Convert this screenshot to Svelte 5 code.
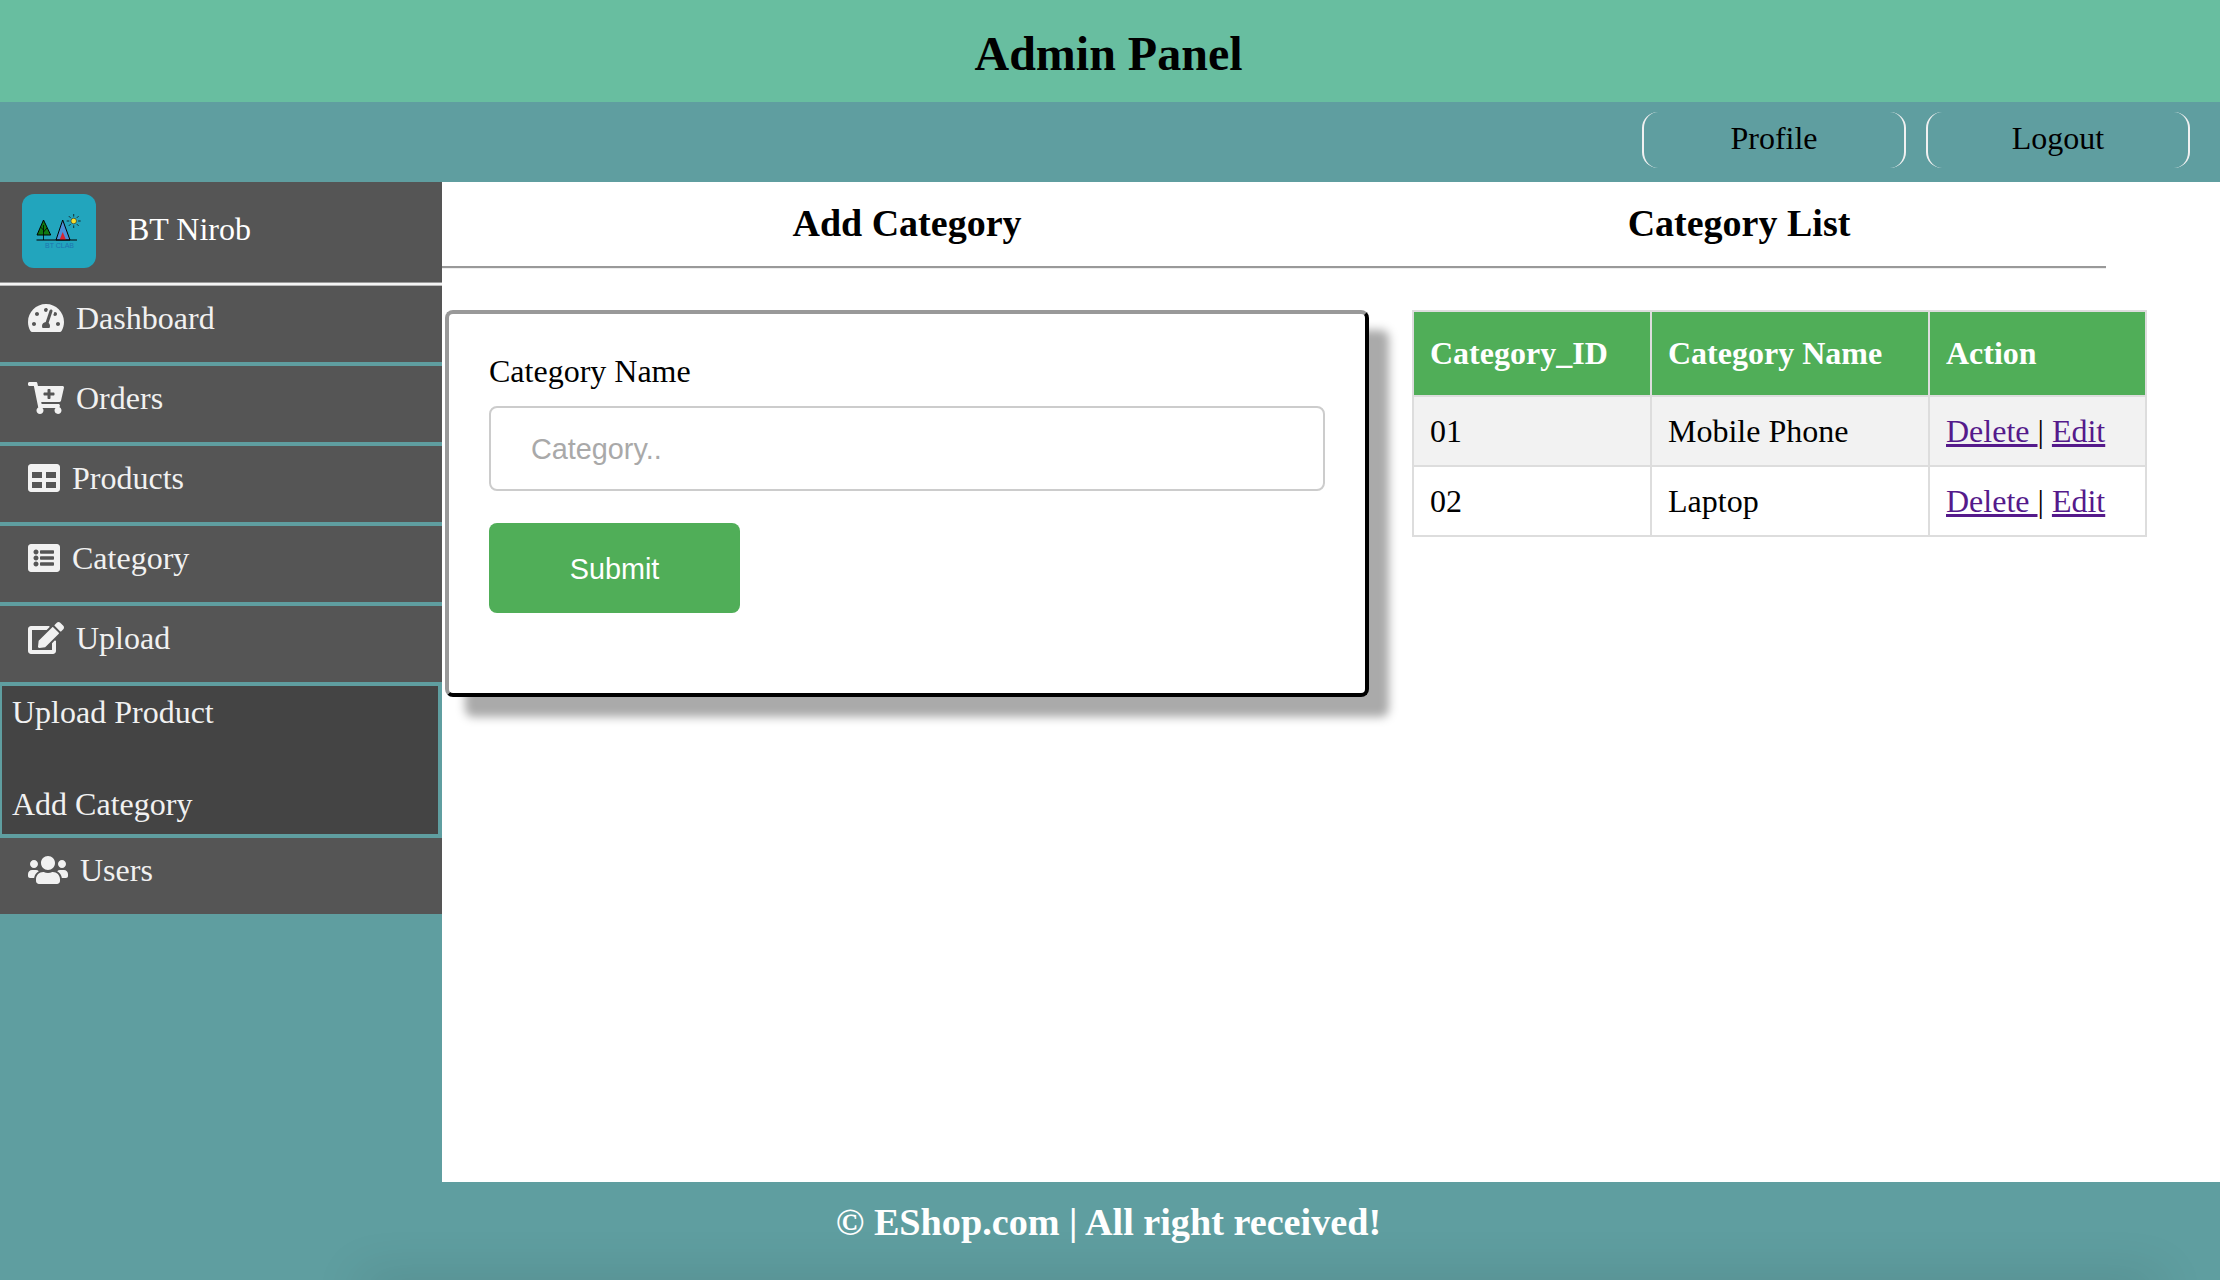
<script>
  const menu = [
    { label: "Dashboard", vb: "0 0 576 512", w: 36, d: "M288 32C128.94 32 0 160.94 0 320c0 52.8 14.25 102.26 39.06 144.8 5.61 9.62 16.3 15.2 27.44 15.2h443c11.14 0 21.83-5.58 27.44-15.2C561.75 422.26 576 372.8 576 320c0-159.06-128.94-288-288-288zm0 64c14.71 0 26.58 10.13 30.32 23.65-1.11 2.26-2.64 4.23-3.45 6.67l-9.22 27.67c-5.13 3.49-10.97 6.01-17.64 6.01-17.67 0-32-14.33-32-32S270.33 96 288 96zM96 384c-17.67 0-32-14.33-32-32s14.33-32 32-32 32 14.33 32 32-14.33 32-32 32zm48-160c-17.67 0-32-14.33-32-32s14.33-32 32-32 32 14.33 32 32-14.33 32-32 32zm246.77-72.41l-61.33 184C343.13 347.33 352 364.54 352 384c0 11.72-3.38 22.55-8.88 32H232.88c-5.5-9.45-8.88-20.28-8.88-32 0-33.94 26.5-61.43 59.9-63.59l61.34-184.01c4.17-12.56 17.73-19.45 30.36-15.17 12.57 4.19 19.35 17.79 15.17 30.36zm14.66 57.2l15.52-46.55c3.47-1.29 7.13-2.23 11.05-2.23 17.67 0 32 14.33 32 32s-14.33 32-32 32c-11.38-.01-20.89-6.28-26.57-15.22zM480 384c-17.67 0-32-14.33-32-32s14.33-32 32-32 32 14.33 32 32-14.33 32-32 32z" },
    { label: "Orders", vb: "0 0 576 512", w: 36, d: "M504.717 320H211.572l6.545 32h268.418c15.401 0 26.816 14.301 23.403 29.319l-5.517 24.276C523.112 414.668 536 433.828 536 456c0 31.202-25.519 56.444-56.824 55.994-29.823-.429-54.35-24.631-55.155-54.447-.44-16.287 6.085-31.049 16.803-41.548H231.176C241.553 426.165 248 440.326 248 456c0 31.813-26.528 57.431-58.67 55.938-28.54-1.325-51.751-24.385-53.251-52.917-1.158-22.034 10.436-41.455 28.051-51.586L93.883 64H24C10.745 64 0 53.255 0 40V24C0 10.745 10.745 0 24 0h102.529c11.401 0 21.228 8.021 23.513 19.19L159.208 64H551.99c15.401 0 26.816 14.301 23.403 29.319l-47.273 208C525.637 312.246 515.923 320 504.717 320zM408 168h-48v-40c0-8.837-7.163-16-16-16h-16c-8.837 0-16 7.163-16 16v40h-48c-8.837 0-16 7.163-16 16v16c0 8.837 7.163 16 16 16h48v40c0 8.837 7.163 16 16 16h16c8.837 0 16-7.163 16-16v-40h48c8.837 0 16-7.163 16-16v-16c0-8.837-7.163-16-16-16z" },
    { label: "Products", vb: "0 0 512 512", w: 32, d: "M464 32H48C21.49 32 0 53.49 0 80v352c0 26.51 21.49 48 48 48h416c26.51 0 48-21.49 48-48V80c0-26.51-21.49-48-48-48zM224 416H64v-96h160v96zm0-160H64v-96h160v96zm224 160H288v-96h160v96zm0-160H288v-96h160v96z" },
    { label: "Category", vb: "0 0 512 512", w: 32, d: "M464 480H48c-26.51 0-48-21.49-48-48V80c0-26.51 21.49-48 48-48h416c26.51 0 48 21.49 48 48v352c0 26.51-21.49 48-48 48zM128 120c-22.091 0-40 17.909-40 40s17.909 40 40 40 40-17.909 40-40-17.909-40-40-40zm0 96c-22.091 0-40 17.909-40 40s17.909 40 40 40 40-17.909 40-40-17.909-40-40-40zm0 96c-22.091 0-40 17.909-40 40s17.909 40 40 40 40-17.909 40-40-17.909-40-40-40zm288-136v-32c0-6.627-5.373-12-12-12H204c-6.627 0-12 5.373-12 12v32c0 6.627 5.373 12 12 12h200c6.627 0 12-5.373 12-12zm0 96v-32c0-6.627-5.373-12-12-12H204c-6.627 0-12 5.373-12 12v32c0 6.627 5.373 12 12 12h200c6.627 0 12-5.373 12-12zm0 96v-32c0-6.627-5.373-12-12-12H204c-6.627 0-12 5.373-12 12v32c0 6.627 5.373 12 12 12h200c6.627 0 12-5.373 12-12z" },
    { label: "Upload", vb: "0 0 576 512", w: 36, d: "M402.6 83.2l90.2 90.2c3.8 3.8 3.8 10 0 13.8L274.4 405.6l-92.8 10.3c-12.4 1.4-22.9-9.1-21.5-21.5l10.3-92.8L388.8 83.2c3.8-3.8 10-3.8 13.8 0zm162-22.9l-48.8-48.8c-15.2-15.2-39.9-15.2-55.2 0l-35.4 35.4c-3.8 3.8-3.8 10 0 13.8l90.2 90.2c3.8 3.8 10 3.8 13.8 0l35.4-35.4c15.2-15.3 15.2-40 0-55.2zM384 346.2V448H64V128h229.8c3.2 0 6.2-1.3 8.5-3.5l40-40c7.6-7.6 2.2-20.5-8.5-20.5H48C21.5 64 0 85.5 0 112v352c0 26.5 21.5 48 48 48h352c26.5 0 48-21.5 48-48V306.2c0-10.7-12.9-16-20.5-8.5l-40 40c-2.2 2.3-3.5 5.3-3.5 8.5z" },
  ];
  const usersIcon = "M96 224c35.3 0 64-28.7 64-64s-28.7-64-64-64-64 28.7-64 64 28.7 64 64 64zm448 0c35.3 0 64-28.7 64-64s-28.7-64-64-64-64 28.7-64 64 28.7 64 64 64zm32 32h-64c-17.6 0-33.5 7.1-45.1 18.6 40.3 22.1 68.9 62 75.1 109.4h66c17.7 0 32-14.3 32-32v-32c0-35.3-28.7-64-64-64zm-256 0c61.9 0 112-50.1 112-112S381.9 32 320 32 208 82.1 208 144s50.1 112 112 112zm76.8 32h-8.3c-20.8 10-43.9 16-68.5 16s-47.6-6-68.5-16h-8.3C179.6 288 128 339.6 128 403.2V432c0 26.5 21.5 48 48 48h288c26.5 0 48-21.5 48-48v-28.8c0-63.6-51.6-115.2-115.2-115.2zm-223.7-13.4C161.5 263.1 145.6 256 128 256H64c-35.3 0-64 28.7-64 64v32c0 17.7 14.3 32 32 32h65.9c6.3-47.4 34.9-87.3 75.2-109.4z";

  const rows = [
    { id: "01", name: "Mobile Phone" },
    { id: "02", name: "Laptop" },
  ];
</script>

<div class="page">
  <header class="top"><h1>Admin Panel</h1></header>

  <nav class="bar">
    <a class="pill" href="#profile">Profile</a>
    <a class="pill" href="#logout">Logout</a>
  </nav>

  <div class="middle">
    <aside class="side">
      <div class="who">
        <svg class="logo" viewBox="0 0 74 74" aria-hidden="true">
          <path d="M21.5 26 L28.7 41 H15 Z" fill="#0f7a12" stroke="#000" stroke-width="1" />
          <path d="M21.5 31 V46 M21.5 38 L25 34 M21.5 36 L18.5 33" stroke="#000" stroke-width="0.8" fill="none" />
          <path d="M40.7 26 L48 46 H34 Z" fill="#4a8fd8" stroke="#000" stroke-width="1" />
          <path d="M40.7 38 L44 46 H37.5 Z" fill="#d8232f" />
          <path d="M14.5 46 H55" stroke="#000" stroke-width="1" />
          <circle cx="51.7" cy="27" r="2.8" fill="#f6de2c" stroke="#222" stroke-width="0.6" />
          <path d="M51.7 20 V22.6 M51.7 31.4 V34 M44.7 27 H47.3 M56.1 27 H58.7 M46.8 22.1 L48.6 23.9 M54.8 30.1 L56.6 31.9 M46.8 31.9 L48.6 30.1 M54.8 23.9 L56.6 22.1" stroke="#111" stroke-width="0.8" />
          <text x="37.5" y="54" text-anchor="middle" class="logotext">BT CLAB</text>
        </svg>
        <span>BT Nirob</span>
      </div>
      <div class="rule"></div>

      {#each menu as m}
        <a class="item" href="#x">
          <svg style:width="{m.w}px" viewBox={m.vb} aria-hidden="true"><path d={m.d} /></svg>
          <span>{m.label}</span>
        </a>
      {/each}

      <div class="sub">
        <a href="#up">Upload Product</a>
        <a href="#cat">Add Category</a>
      </div>

      <a class="item last" href="#users">
        <svg style:width="40px" viewBox="0 0 640 512" aria-hidden="true"><path d={usersIcon} /></svg>
        <span>Users</span>
      </a>
    </aside>

    <main class="content">
      <section class="left">
        <h3>Add Category</h3>
        <hr />
        <form class="card">
          <label for="cat">Category Name</label>
          <input id="cat" type="text" placeholder="Category.." />
          <button type="button">Submit</button>
        </form>
      </section>

      <section class="right">
        <h3>Category List</h3>
        <hr />
        <table>
          <colgroup>
            <col style="width:238px" />
            <col style="width:278px" />
            <col />
          </colgroup>
          <thead>
            <tr><th>Category_ID</th><th>Category Name</th><th>Action</th></tr>
          </thead>
          <tbody>
            {#each rows as r}
              <tr>
                <td>{r.id}</td>
                <td>{r.name}</td>
                <td><a href="#d">{"Delete "}</a>{"| "}<a href="#e">Edit</a></td>
              </tr>
            {/each}
          </tbody>
        </table>
      </section>
    </main>
  </div>

  <footer class="foot">© EShop.com | All right received!</footer>
</div>

<style>
  :global(body) {
    margin: 0;
    background: #5f9ea0;
  }
  .page {
    display: flex;
    flex-direction: column;
    height: 1280px;
    overflow: hidden;
    font-family: "Liberation Serif", "Times New Roman", serif;
    font-size: 32px;
    color: #000;
  }
  .top {
    height: 102px;
    box-sizing: border-box;
    padding: 5px 3px 0 0;
    display: flex;
    align-items: center;
    justify-content: center;
    background: #68bea0;
  }
  h1 {
    margin: 0;
    font-size: 48px;
    font-weight: bold;
  }
  .bar {
    height: 80px;
    box-sizing: border-box;
    padding: 10px 30px 0 0;
    display: flex;
    justify-content: flex-end;
    gap: 20px;
    background: #5f9ea0;
  }
  .pill {
    width: 264px;
    height: 56px;
    box-sizing: border-box;
    padding-bottom: 3px;
    display: flex;
    align-items: center;
    justify-content: center;
    color: #000;
    text-decoration: none;
    border-left: 2px solid #f1f1f1;
    border-right: 2px solid #f1f1f1;
    border-radius: 16px;
  }
  .middle {
    flex: 1;
    display: flex;
    min-height: 0;
  }
  .side {
    width: 442px;
    flex: none;
    background: #5f9ea0;
  }
  .who {
    height: 100px;
    box-sizing: border-box;
    padding: 12px 0 0 22px;
    display: flex;
    gap: 32px;
    background: #555;
    color: #fff;
  }
  .who span {
    margin-top: 17px;
  }
  .rule {
    height: 4px;
    box-sizing: border-box;
    background: #f4f4f4;
    border-top: 1px solid #999;
    border-bottom: 1px solid #bbb;
  }
  .logo {
    width: 74px;
    height: 74px;
    border-radius: 12px;
    background: #22a5bd;
  }
  .logotext {
    font-family: "Liberation Sans", sans-serif;
    font-size: 7px;
    fill: #1f74b0;
  }
  .item {
    height: 76px;
    display: flex;
    align-items: flex-start;
    gap: 12px;
    padding-left: 28px;
    background: #555;
    color: #f1f1f1;
    text-decoration: none;
    border-bottom: 4px solid #5f9ea0;
  }
  .item svg {
    height: 32px;
    margin-top: 16px;
    fill: #f1f1f1;
    flex: none;
  }
  .item span {
    margin-top: 14px;
    line-height: 37px;
  }
  .item.last {
    border-bottom: 0;
  }
  .sub {
    height: 152px;
    box-sizing: border-box;
    padding: 8px 0 0 10px;
    display: flex;
    flex-direction: column;
    gap: 55px;
    background: #444;
    border-left: 2px solid #5f9ea0;
    border-right: 4px solid #5f9ea0;
    border-bottom: 4px solid #5f9ea0;
  }
  .sub a {
    color: #f1f1f1;
    text-decoration: none;
    line-height: 37px;
  }
  .content {
    flex: 1;
    display: flex;
    align-items: flex-start;
    background: #fff;
  }
  .left {
    width: 930px;
    flex: none;
  }
  .right {
    width: 734px;
    flex: none;
  }
  h3 {
    margin: 0;
    height: 84px;
    line-height: 82px;
    text-align: center;
    font-size: 38px;
    font-weight: bold;
  }
  hr {
    margin: 0;
    height: 0;
    border: 0;
    border-top: 2px solid #999;
    border-bottom: 1px solid #eee;
  }
  .card {
    width: 924px;
    height: 387px;
    box-sizing: border-box;
    margin: 41px 0 0 3px;
    padding: 39px 40px 0;
    display: flex;
    flex-direction: column;
    align-items: flex-start;
    background: #fff;
    border: 4px solid;
    border-color: #999 #000 #000 #999;
    border-radius: 8px;
    box-shadow: 20px 20px 10px #aaa;
  }
  label {
    line-height: 37px;
  }
  input {
    width: 100%;
    height: 85px;
    box-sizing: border-box;
    margin-top: 16px;
    padding: 2px 40px 0;
    font-family: "Liberation Sans", Arial, sans-serif;
    font-size: 28.8px;
    border: 2px solid #ccc;
    border-radius: 8px;
    outline: none;
  }
  input::placeholder {
    color: #a9a9a9;
  }
  button {
    width: 251px;
    height: 90px;
    margin-top: 32px;
    padding: 2px 0 0;
    font-family: "Liberation Sans", Arial, sans-serif;
    font-size: 28.8px;
    color: #fff;
    background: #50ae58;
    border: 0;
    border-radius: 8px;
  }
  table {
    width: 735px;
    margin: 41px 0 0 40px;
    table-layout: fixed;
    border-collapse: collapse;
  }
  th,
  td {
    border: 2px solid #ddd;
    padding: 0 16px;
    text-align: left;
    font-size: 32px;
  }
  th {
    height: 83px;
    color: #fff;
    background: #50ae58;
    font-weight: bold;
  }
  td {
    height: 68px;
  }
  tbody tr:nth-child(odd) td {
    background: #f2f2f2;
  }
  td a {
    color: #551a8b;
  }
  .foot {
    position: relative;
    height: 98px;
    box-sizing: border-box;
    padding: 0 3px 18px 0;
    display: flex;
    align-items: center;
    justify-content: center;
    overflow: hidden;
    color: #fff;
    font-size: 38.2px;
    font-weight: bold;
    background: #5f9ea0;
  }
  .foot::after {
    content: "";
    position: absolute;
    left: 360px;
    right: 60px;
    top: 100%;
    height: 20px;
    box-shadow: 0 0 50px rgba(0, 0, 0, 0.18);
  }
</style>
